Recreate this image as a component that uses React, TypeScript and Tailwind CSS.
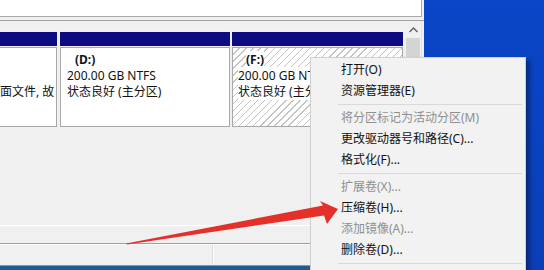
import React from "react";

const font = { fontFamily: '"Noto Sans", "Noto Sans CJK SC", sans-serif' };

type Item = { label: string; disabled?: boolean } | "sep";

const menuItems: Item[] = [
	{ label: "打开(O)" },
	{ label: "资源管理器(E)" },
	"sep",
	{ label: "将分区标记为活动分区(M)", disabled: true },
	{ label: "更改驱动器号和路径(C)..." },
	{ label: "格式化(F)..." },
	"sep",
	{ label: "扩展卷(X)...", disabled: true },
	{ label: "压缩卷(H)..." },
	{ label: "添加镜像(A)...", disabled: true },
	{ label: "删除卷(D)..." },
	"sep",
];

const ContextMenu = () => {
	return (
		<div className="absolute left-[310px] top-[57px] w-[216px] h-[230px] bg-[#f2f2f2] border border-[#d0d0d0] pt-[1px] shadow-[4px_3px_4px_rgba(0,0,20,0.35)]">
			{menuItems.map((it, i) =>
				it === "sep" ? (
					<div key={i} className="h-[6px] flex items-center">
						<div className="ml-[27px] mr-[3px] w-full h-px bg-[#d9d9d9]"></div>
					</div>
				) : (
					<div
						key={i}
						className={
							"h-[21px] pl-[30px] flex items-center text-[12px] whitespace-nowrap " +
							(it.disabled ? "text-[#8f8f8f]" : "text-[#111]")
						}
					>
						{it.label}
					</div>
				),
			)}
		</div>
	);
};

const App = () => {
	return (
		<div className="relative w-[544px] h-[270px] overflow-hidden flex bg-[#0b46c6]" style={font}>
			{/* window */}
			<div className="w-[424px] h-full flex flex-col bg-[#f0f0f0]">
				{/* volume list */}
				<div className="h-[20px] shrink-0">
					<div className="w-[422px] h-[17px] bg-white border-b border-r border-[#a9a9a9]"></div>
				</div>

				{/* graphical view */}
				<div className="h-[205px] shrink-0 border-t border-[#a0a0a0] flex">
					<div className="flex-1 pt-[11px]">
						<div className="flex gap-[2px]">
							{/* cut-off column */}
							<div className="w-[57px] mr-[1px]">
								<div className="h-[14px] bg-[#0c0c80]"></div>
								<div className="mt-[1px] h-[80px] bg-white border-y border-r border-[#a8a8a8] pt-[4px] text-[12px] leading-[16px] text-[#111] whitespace-nowrap">
									<div className="h-[16px]"></div>
									<div className="h-[16px]"></div>
									<div>面文件, 故</div>
								</div>
							</div>

							{/* D */}
							<div className="w-[170px]">
								<div className="h-[14px] bg-[#0c0c80]"></div>
								<div className="mt-[1px] h-[80px] bg-white border border-[#a8a8a8] pt-[4px] pl-[6px] text-[12px] leading-[16px] text-[#111] whitespace-nowrap">
									<div className="pl-[8px] font-bold">(D:)</div>
									<div>200.00 GB NTFS</div>
									<div>状态良好 (主分区)</div>
								</div>
							</div>

							{/* F */}
							<div className="w-[171px]">
								<div className="h-[14px] bg-[#0c0c80]"></div>
								<div className="mt-[1px] h-[80px] border border-[#a8a8a8] bg-[repeating-linear-gradient(135deg,#ffffff_0px,#ffffff_4px,#c4c4c4_4px,#c4c4c4_5px)] pt-[4px] pl-[5px] text-[12px] leading-[16px] text-[#111] whitespace-nowrap">
									<div className="pl-[8px] font-bold">
										<span className="bg-white">(F:)</span>
									</div>
									<div>
										<span className="bg-white">200.00 GB NTFS</span>
									</div>
									<div>
										<span className="bg-white">状态良好 (主分区)</span>
									</div>
								</div>
							</div>
						</div>
					</div>

					{/* scrollbar */}
					<div className="w-[16px] flex flex-col bg-[#f0f0f0]">
						<div className="h-[17px] flex items-center justify-center">
							<svg width="9" height="6" viewBox="0 0 9 6">
								<path d="M0.5 5 L4.5 1 L8.5 5" fill="none" stroke="#606060" strokeWidth="1.4" />
							</svg>
						</div>
						<div className="mx-[1px] h-[120px] bg-[#d4d4d4]"></div>
					</div>
					<div className="w-[3px] border-l border-[#e3e3e3]"></div>
				</div>

				{/* lower strip */}
				<div className="h-[19px] shrink-0 border-t border-white border-b border-b-[#a0a0a0]"></div>

				{/* status bar */}
				<div className="h-[21px] shrink-0 flex border-t border-[#fafafa]">
					<div className="w-[213px] border-r border-[#dadada]"></div>
					<div className="w-px bg-white"></div>
					<div className="flex-1"></div>
				</div>

				{/* taskbar */}
				<div className="h-[5px] shrink-0 bg-[#1f5b8c] border-t border-[#6aa0c8]"></div>
			</div>

			{/* desktop */}
			<div className="flex-1 h-full bg-[linear-gradient(180deg,#0a46c8,#0a3fb6)]"></div>

			<ContextMenu />

			{/* red arrow */}
			<svg className="absolute left-0 top-0 pointer-events-none" width="544" height="270" viewBox="0 0 544 270">
				<polygon
					points="126,243.5 323,205.5 320,201 338,209 327,224 324,215.5 127,244.5"
					fill="#e5302a"
				/>
			</svg>
		</div>
	);
};

export default App;
